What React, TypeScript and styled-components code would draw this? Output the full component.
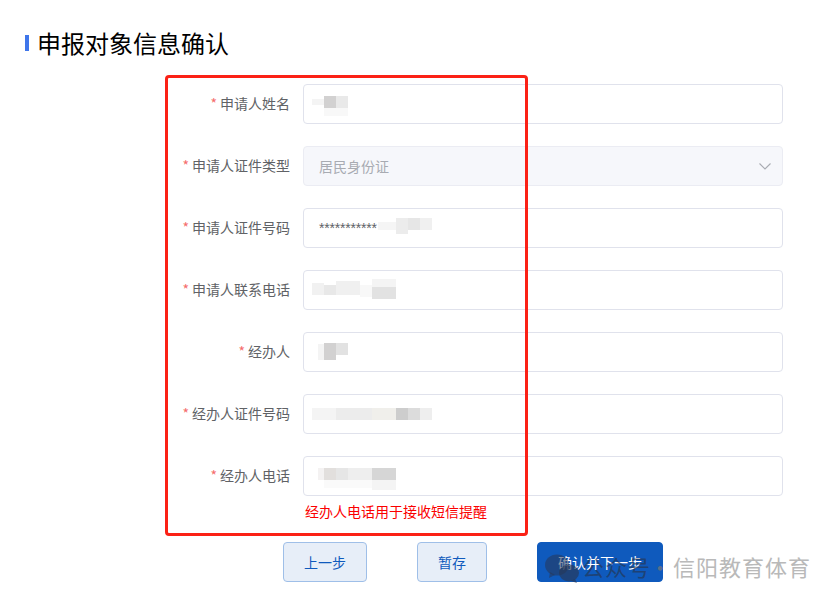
import React from "react";
import styled, { createGlobalStyle } from "styled-components";

const Global = createGlobalStyle`
  html, body { margin: 0; padding: 0; background: #fff; }
  body { font-family: "Noto Sans CJK SC", "Liberation Sans", sans-serif; }
  #root { width: 836px; height: 601px; overflow: hidden; }
`;

const Page = styled.div`
  position: relative;
  width: 836px;
  height: 601px;
  box-sizing: border-box;
  padding: 26px 53px 0 25px;
  background: #fff;
`;

const TitleRow = styled.div`
  display: flex;
  align-items: center;
  gap: 8px;
  height: 34px;
  margin-bottom: 24px;
`;

const TitleBar = styled.span`
  width: 4px;
  height: 16px;
  background: #3f76ea;
`;

const Title = styled.h1`
  margin: 0;
  font-size: 24px;
  line-height: 34px;
  font-weight: 400;
  color: #000;
`;

const Form = styled.div`
  display: flex;
  flex-direction: column;
  gap: 22px;
`;

const Row = styled.div`
  display: flex;
  align-items: center;
  height: 40px;
`;

const Label = styled.label`
  flex: 0 0 278px;
  box-sizing: border-box;
  padding: 0 13px 2px 0;
  text-align: right;
  font-size: 14px;
  line-height: 38px;
  color: #606266;
  white-space: nowrap;
`;

const Star = styled.span`
  color: #f56c6c;
  margin-right: 3px;
`;

const Field = styled.div<{ $disabled?: boolean }>`
  position: relative;
  flex: 1;
  height: 40px;
  box-sizing: border-box;
  display: flex;
  align-items: center;
  justify-content: space-between;
  padding: 0 15px 1px;
  border: 1px solid ${(p) => (p.$disabled ? "#ebecf3" : "#e0e2ec")};
  border-radius: 4px;
  background: ${(p) => (p.$disabled ? "#f6f7fb" : "#fff")};
  color: ${(p) => (p.$disabled ? "#a8abb2" : "#606266")};
  font-size: 14px;
`;

const Chevron = styled.svg`
  margin-right: -5px;
`;

const Masked = styled.span`
  font-family: "Liberation Sans", sans-serif;
  font-size: 14px;
  letter-spacing: -0.2px;
  line-height: 38px;
`;

const Mosaic = styled.svg`
  position: absolute;
  left: -1px;
  top: -1px;
  pointer-events: none;
`;

const Hint = styled.div`
  margin: 5px 0 0 280px;
  height: 20px;
  font-size: 14px;
  line-height: 20px;
  color: #fb0000;
`;

const Actions = styled.div`
  display: flex;
  margin: 21px 0 0 258px;
`;

const Button = styled.button<{ $w: number; $gap: number; $primary?: boolean }>`
  width: ${(p) => p.$w}px;
  height: 40px;
  margin-right: ${(p) => p.$gap}px;
  padding: 0;
  border: 1px solid ${(p) => (p.$primary ? "#0f5abd" : "#9fbfe8")};
  border-radius: 4px;
  background: ${(p) => (p.$primary ? "#0f5abd" : "#e7eef8")};
  color: ${(p) => (p.$primary ? "#fff" : "#0f5abd")};
  font-family: inherit;
  font-size: 14px;
`;

const Highlight = styled.div`
  position: absolute;
  left: 165px;
  top: 75px;
  width: 363px;
  height: 461px;
  box-sizing: border-box;
  border: 3px solid #fb2116;
  border-radius: 4px;
  pointer-events: none;
`;

const Watermark = styled.div`
  position: absolute;
  left: 545px;
  top: 549px;
  display: flex;
  align-items: center;
  height: 34px;
  font-size: 22px;
  letter-spacing: 1px;
  pointer-events: none;
  white-space: nowrap;
`;

const WatermarkIcon = styled.svg`
  margin-top: 6px;
`;

const WatermarkDim = styled.span`
  color: rgba(40, 50, 70, 0.62);
  margin-left: 1px;
`;

const WatermarkSep = styled.span`
  color: rgba(120, 120, 120, 0.7);
  margin: 0 1px 0 -2px;
`;

const WatermarkName = styled.span`
  color: #b9b9b9;
`;

type Cell = [number, number, number, number, string];

const rows: { label: string; cells: Cell[]; text?: string; select?: string }[] = [
  {
    label: "申请人姓名",
    cells: [
      [9, 15, 12, 6, "#f4f4f4"],
      [21, 12, 12, 12, "#d2d1d1"],
      [33, 12, 12, 12, "#e9e9e9"],
      [21, 24, 24, 8, "#f8f8f8"],
    ],
  },
  { label: "申请人证件类型", cells: [], select: "居民身份证" },
  {
    label: "申请人证件号码",
    text: "***********",
    cells: [
      [75, 14, 21, 8, "#f5f5f5"],
      [93, 10, 12, 16, "#ececec"],
      [105, 10, 12, 12, "#e6e6e6"],
      [117, 10, 12, 12, "#f0f0f0"],
    ],
  },
  {
    label: "申请人联系电话",
    cells: [
      [9, 13, 12, 12, "#f1f1f1"],
      [21, 15, 12, 10, "#e8e8e8"],
      [33, 11, 24, 14, "#f0f0f0"],
      [57, 15, 12, 12, "#f8f8f8"],
      [69, 9, 24, 8, "#f4f4f4"],
      [69, 17, 24, 12, "#e2e2e2"],
    ],
  },
  {
    label: "经办人",
    cells: [
      [15, 12, 6, 16, "#f4f4f4"],
      [21, 11, 12, 17, "#d2d1d1"],
      [33, 11, 12, 12, "#e2e2e2"],
    ],
  },
  {
    label: "经办人证件号码",
    cells: [
      [9, 14, 24, 12, "#f4f4f4"],
      [33, 14, 36, 12, "#ececec"],
      [69, 14, 24, 12, "#f0efeb"],
      [93, 14, 12, 12, "#cdcdcd"],
      [105, 14, 12, 12, "#dcdcdc"],
      [117, 14, 12, 12, "#eeeeee"],
    ],
  },
  {
    label: "经办人电话",
    cells: [
      [15, 12, 6, 12, "#f4f2f2"],
      [21, 12, 12, 12, "#e2dfdd"],
      [33, 12, 12, 12, "#e6e6e6"],
      [45, 12, 24, 12, "#eeeeee"],
      [69, 12, 24, 12, "#d6d6d6"],
      [21, 24, 48, 8, "#fafafa"],
      [69, 24, 24, 10, "#f4f4f4"],
    ],
  },
];

export default function App() {
  return (
    <Page>
      <Global />
      <TitleRow>
        <TitleBar />
        <Title>申报对象信息确认</Title>
      </TitleRow>
      <Form>
        {rows.map((r) => (
          <Row key={r.label}>
            <Label>
              <Star>*</Star>
              {r.label}
            </Label>
            <Field $disabled={!!r.select}>
              {r.text && <Masked>{r.text}</Masked>}
              {r.select && <span>{r.select}</span>}
              {r.select && (
                <Chevron width="14" height="14" viewBox="0 0 14 14" fill="none">
                  <path d="M1.5 4.5 7 10l5.5-5.5" stroke="#a8abb2" strokeWidth="1.1" />
                </Chevron>
              )}
              {r.cells.length > 0 && (
                <Mosaic width="140" height="40" viewBox="0 0 140 40">
                  {r.cells.map((c, i) => (
                    <rect key={i} x={c[0]} y={c[1]} width={c[2]} height={c[3]} fill={c[4]} />
                  ))}
                </Mosaic>
              )}
            </Field>
          </Row>
        ))}
      </Form>
      <Hint>经办人电话用于接收短信提醒</Hint>
      <Actions>
        <Button $w={84} $gap={50}>上一步</Button>
        <Button $w={70} $gap={50}>暂存</Button>
        <Button $w={126} $gap={0} $primary>确认并下一步</Button>
      </Actions>
      <Highlight />
      <Watermark>
        <WatermarkIcon width="36" height="30" viewBox="0 0 36 30">
          <ellipse cx="12" cy="11" rx="12" ry="10.5" fill="rgba(40,55,85,0.55)" />
          <path d="M5 18l-1 6 6-3z" fill="rgba(40,55,85,0.55)" />
          <ellipse cx="24" cy="19" rx="10" ry="8.5" fill="rgba(40,55,85,0.65)" />
          <path d="M30 25l2 4-6-2z" fill="rgba(40,55,85,0.65)" />
        </WatermarkIcon>
        <WatermarkDim>公众号</WatermarkDim>
        <WatermarkSep>·</WatermarkSep>
        <WatermarkName>信阳教育体育</WatermarkName>
      </Watermark>
    </Page>
  );
}
